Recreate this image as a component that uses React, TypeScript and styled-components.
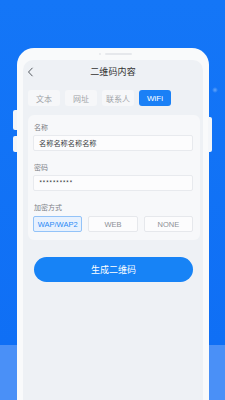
import React, { useState } from "react";
import styled, { createGlobalStyle } from "styled-components";

const Global = createGlobalStyle`
  html, body { margin: 0; padding: 0; }
  body { font-family: "Noto Sans CJK SC", "Noto Sans", sans-serif; }
`;

const Page = styled.div`
  width: 225px;
  height: 400px;
  overflow: hidden;
  box-sizing: border-box;
  padding: 48px 16px 0 17px;
  background:
    radial-gradient(circle at 215px 90px, rgba(255,255,255,0.35) 0, rgba(255,255,255,0) 3px),
    linear-gradient(180deg, #1476f7 0, #0f6ff5 345px, #4a90f7 345px, #4a90f7 100%);
`;

const Phone = styled.div`
  position: relative;
  width: 192px;
  height: 380px;
  box-sizing: border-box;
  background: #f9fafb;
  border-radius: 17px 17px 0 0;
  padding: 0 6px;
  display: flex;
  flex-direction: column;
`;

const SideKey = styled.div<{ $side: "left" | "right"; $top: number; $h: number }>`
  position: absolute;
  top: ${(p) => p.$top}px;
  ${(p) => (p.$side === "left" ? "left: -4px;" : "right: -3px;")}
  width: 4px;
  height: ${(p) => p.$h}px;
  background: #f4f6f9;
  border-radius: ${(p) => (p.$side === "left" ? "2px 0 0 2px" : "0 2px 2px 0")};
`;

const Bezel = styled.div`
  height: 12px;
  display: flex;
  align-items: center;
  justify-content: center;
  gap: 4px;
  padding-left: 4px;
`;

const Dot = styled.span`
  width: 2px;
  height: 2px;
  border-radius: 50%;
  background: #e4e7eb;
`;

const Speaker = styled.span`
  width: 27px;
  height: 2px;
  border-radius: 1px;
  background: #e6e8ec;
`;

const Screen = styled.div`
  flex: 1;
  background: #eef1f5;
  border-radius: 10px 10px 0 0;
  display: flex;
  flex-direction: column;
`;

const Header = styled.div`
  height: 22px;
  position: relative;
  display: flex;
  align-items: center;
  justify-content: center;
`;

const Back = styled.svg`
  position: absolute;
  left: 4px;
  top: 7px;
`;

const Title = styled.div`
  font-size: 9px;
  color: #333;
  letter-spacing: 0.1px;
`;

const Tabs = styled.div`
  display: flex;
  gap: 5px;
  margin: 8px 0 0 5px;
`;

const Tab = styled.div<{ $active?: boolean }>`
  width: 32px;
  height: 16px;
  border-radius: 3px;
  display: flex;
  align-items: center;
  justify-content: center;
  font-family: "Liberation Sans", "Noto Sans CJK SC", sans-serif;
  font-size: 8px;
  background: ${(p) => (p.$active ? "#1a80f6" : "#f6f7f9")};
  color: ${(p) => (p.$active ? "#ffffff" : "#a0a3a8")};
`;

const Card = styled.div`
  margin: 9px 3px 0 5px;
  background: #f7f8fa;
  border-radius: 6px;
  padding: 6px 7px 8px 5px;
  display: flex;
  flex-direction: column;
`;

const Label = styled.div<{ $first?: boolean }>`
  height: 12px;
  line-height: 12px;
  font-size: 7px;
  color: #7d8187;
  margin-top: ${(p) => (p.$first ? 0 : 10)}px;
  margin-bottom: 2px;
  padding-left: 1px;
`;

const Field = styled.div`
  height: 16px;
  box-sizing: border-box;
  border: 1px solid #e8eaee;
  border-radius: 2px;
  background: #fcfcfd;
  display: flex;
  align-items: center;
  padding-left: 5px;
  font-size: 7.2px;
  color: #3a3d42;
`;

const Options = styled.div`
  display: grid;
  grid-template-columns: repeat(3, 1fr);
  gap: 6px;
  margin-top: 1px;
`;

const Option = styled.div<{ $active?: boolean }>`
  height: 16px;
  box-sizing: border-box;
  border-radius: 2px;
  border: 1px solid ${(p) => (p.$active ? "#93c3f8" : "#e6e8ec")};
  background: ${(p) => (p.$active ? "#e7f1fe" : "#fcfcfd")};
  color: ${(p) => (p.$active ? "#2a89f5" : "#8c9096")};
  font-family: "Liberation Sans", sans-serif;
  font-size: 7.5px;
  display: flex;
  align-items: center;
  justify-content: center;
`;

const Generate = styled.button`
  margin: 17px 10px 0 11px;
  height: 25px;
  border: none;
  border-radius: 13px;
  background: #1783f6;
  color: #fff;
  font-family: "Noto Sans CJK SC", sans-serif;
  font-size: 9px;
  padding: 0;
`;

export default function App() {
  const [tab, setTab] = useState("WiFi");
  const [mode, setMode] = useState("WAP/WAP2");
  return (
    <>
      <Global />
      <Page>
        <Phone>
          <SideKey $side="left" $top={62} $h={20} />
          <SideKey $side="left" $top={88} $h={16} />
          <SideKey $side="right" $top={69} $h={35} />
          <Bezel>
            <Dot />
            <Speaker />
          </Bezel>
          <Screen>
            <Header>
              <Back width="7" height="10" viewBox="0 0 7 10">
                <path d="M5.5 0.8 L1.5 5 L5.5 9.2" fill="none" stroke="#555a60" strokeWidth="1" />
              </Back>
              <Title>二维码内容</Title>
            </Header>
            <Tabs>
              {["文本", "网址", "联系人", "WiFi"].map((t) => (
                <Tab key={t} $active={tab === t} onClick={() => setTab(t)}>
                  {t}
                </Tab>
              ))}
            </Tabs>
            <Card>
              <Label $first>名称</Label>
              <Field>名称名称名称名称</Field>
              <Label>密码</Label>
              <Field>**********</Field>
              <Label>加密方式</Label>
              <Options>
                {["WAP/WAP2", "WEB", "NONE"].map((m) => (
                  <Option key={m} $active={mode === m} onClick={() => setMode(m)}>
                    {m}
                  </Option>
                ))}
              </Options>
            </Card>
            <Generate>生成二维码</Generate>
          </Screen>
        </Phone>
      </Page>
    </>
  );
}
